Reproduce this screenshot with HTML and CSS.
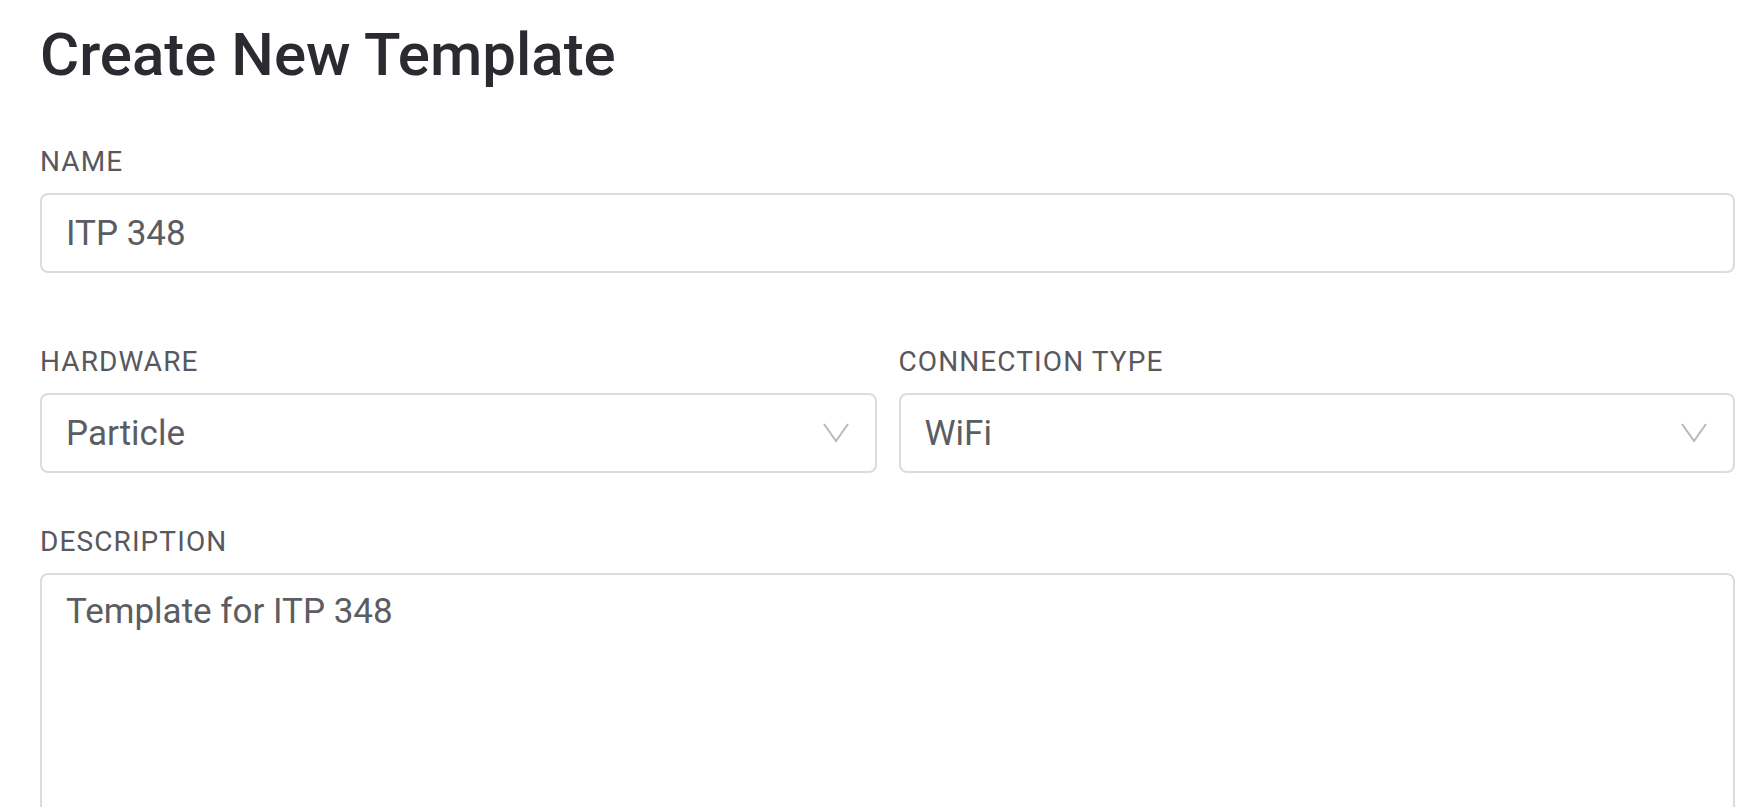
FILE: index.html
```html
<!DOCTYPE html>
<html lang="en">
<head>
  <meta charset="UTF-8" />
  <meta name="viewport" content="width=device-width, initial-scale=1.0"/>
  <title>Create New Template</title>
  <link rel="stylesheet" href="styles.css">
</head>
<body>
  <div class="template-container">
    <h1>Create New Template</h1>
    <form id="templateForm">
      <div class="field field-name">
        <label for="name">NAME</label>
        <input type="text" id="name" value="ITP 348" />
      </div>

      <div class="field-row">
        <div class="field">
          <label for="hardware">HARDWARE</label>
          <div class="select-wrap">
            <select id="hardware">
              <option>Particle</option>
            </select>
            <svg class="chevron" width="26" height="20" viewBox="0 0 26 20">
              <polyline points="1,1 13,18 25,1" fill="none" stroke="#b9b9bc" stroke-width="2"/>
            </svg>
          </div>
        </div>
        <div class="field">
          <label for="connection">CONNECTION TYPE</label>
          <div class="select-wrap">
            <select id="connection">
              <option>WiFi</option>
            </select>
            <svg class="chevron" width="26" height="20" viewBox="0 0 26 20">
              <polyline points="1,1 13,18 25,1" fill="none" stroke="#b9b9bc" stroke-width="2"/>
            </svg>
          </div>
        </div>
      </div>

      <div class="field">
        <label for="description">DESCRIPTION</label>
        <textarea id="description">Template for ITP 348</textarea>
      </div>
    </form>
  </div>
</body>
</html>
```

FILE: styles.css
```css
body {
  margin: 0;
  background-color: white;
  font-family: Roboto, "Liberation Sans", sans-serif;
  color: #58585e;
}

.template-container {
  padding: 20px 29px 0 40px;
}

h1 {
  margin: 0 0 55px 0;
  font-size: 60px;
  line-height: 70px;
  font-weight: 500;
  color: #2b2a30;
}

.field {
  margin-bottom: 52px;
}

.field-name {
  margin-bottom: 72px;
}

label {
  display: block;
  font-size: 28px;
  line-height: 33px;
  letter-spacing: 1.1px;
  margin-bottom: 15px;
  color: #58585e;
}

input, select, textarea {
  display: block;
  width: 100%;
  box-sizing: border-box;
  font-family: inherit;
  font-size: 35px;
  color: #5c5c63;
  background-color: white;
  border: 2px solid #dcdcdc;
  border-radius: 8px;
  outline: none;
}

input, select {
  height: 80px;
  padding: 0 24px;
}

select {
  appearance: none;
  -webkit-appearance: none;
}

.field-row {
  display: flex;
  gap: 22px;
}

.field-row .field {
  flex: 1;
}

.select-wrap {
  position: relative;
}

.chevron {
  position: absolute;
  right: 28px;
  top: 30px;
  pointer-events: none;
}

textarea {
  height: 320px;
  padding: 16px 24px;
  line-height: 42px;
  resize: none;
}
```
